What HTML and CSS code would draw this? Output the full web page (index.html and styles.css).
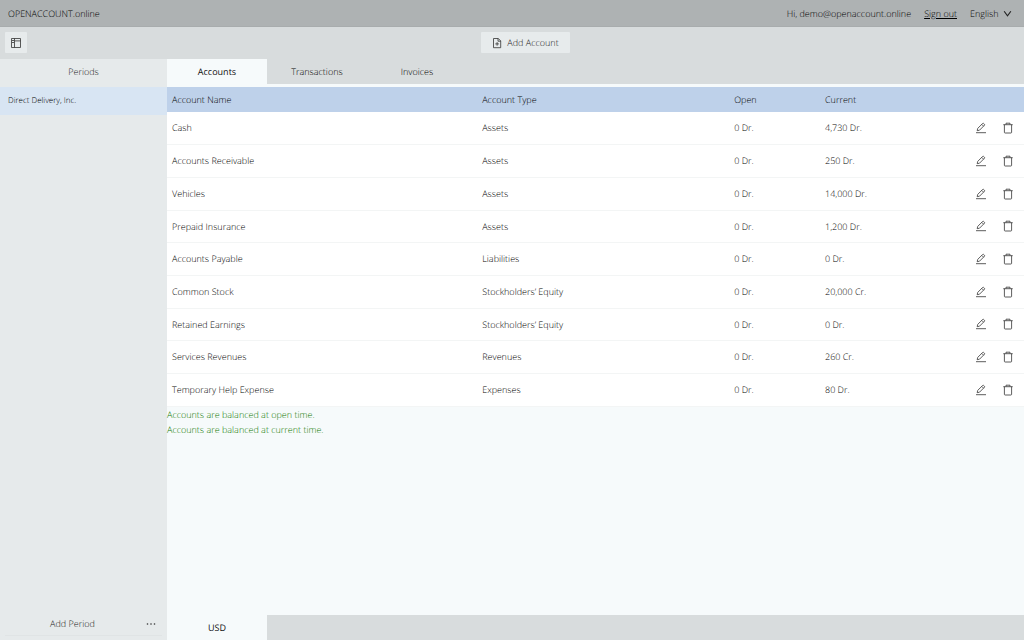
FILE: index.html
```
<!DOCTYPE html>
<html lang="en">
<head>
<meta charset="utf-8">
<meta name="viewport" content="width=device-width, initial-scale=1">
<title>OPENACCOUNT.online</title>
<link rel="stylesheet" href="styles.css">
</head>
<body>
<svg class="sprite" aria-hidden="true">
  <symbol id="edit" viewBox="0 0 12 12"><path d="M1 10.7h10M2.2 8.7l.5-2.3L7.6 1.5a.8.8 0 0 1 1.1 0l.7.7a.8.8 0 0 1 0 1.1L4.5 8.2zM6.8 2.4l1.8 1.8"/></symbol>
  <symbol id="trash" viewBox="0 0 12 12"><path d="M1.3 2.7h9.4M4 2.5V1.2h4v1.3M2.4 2.7v7.6q0 .7.7.7h5.8q.7 0 .7-.7V2.7"/></symbol>
</svg>
<div class="app">
  <header class="topbar">
    <span class="brand">OPENACCOUNT.online</span>
    <span class="greeting">Hi, demo@openaccount.online</span>
    <a class="signout" href="#">Sign out</a>
    <label class="language">
      <select class="language-select" aria-label="Language"><option>English</option></select>
      <svg class="chevron" viewBox="0 0 8 8"><path d="M1 2l3 4 3-4"/></svg>
    </label>
  </header>
  <div class="toolbar">
    <button class="tool" type="button" aria-label="Toggle periods">
      <svg class="icon" viewBox="0 0 12 12"><path d="M1.5 1.5h9v9h-9zM4.5 1.5v9M4.5 3.9h6M2 3.5h2M2 5.5h2"/></svg>
    </button>
    <div class="toolbar-main">
      <button class="tool add-account" type="button">
        <svg class="icon" viewBox="0 0 12 12"><path d="M2.5 1.5h4.8l2.4 2.4v6.8H2.5zM7 1.5v2.7h2.7M6.1 5.1v3.6M4.3 6.9h3.6"/></svg>
        Add Account
      </button>
    </div>
  </div>
  <div class="workspace">
    <aside class="sidebar">
      <h2 class="sidebar-title">Periods</h2>
      <a class="period" href="#">Direct Delivery, Inc.</a>
      <div class="period-actions">
        <button class="add-period" type="button">Add Period</button>
        <button class="more" type="button" aria-label="More"><svg class="dots" viewBox="0 0 10 4"><circle cx="1.5" cy="2" r=".8"/><circle cx="5" cy="2" r=".8"/><circle cx="8.5" cy="2" r=".8"/></svg></button>
      </div>
    </aside>
    <main class="content">
      <nav class="tabs">
        <button class="tab active" type="button">Accounts</button>
        <button class="tab" type="button">Transactions</button>
        <button class="tab" type="button">Invoices</button>
      </nav>
      <div class="sheet">
        <table class="accounts">
          <colgroup><col class="col-name"><col class="col-type"><col class="col-open"><col class="col-current"><col class="col-actions"></colgroup>
          <thead><tr><th>Account Name</th><th>Account Type</th><th>Open</th><th>Current</th><th></th></tr></thead>
          <tbody id="rows"></tbody>
        </table>
        <p class="status">Accounts are balanced at open time.</p>
        <p class="status">Accounts are balanced at current time.</p>
      </div>
      <nav class="currencies"><button class="tab currency active" type="button">USD</button></nav>
    </main>
  </div>
</div>
<script src="app.js"></script>
</body>
</html>
```
FILE: styles.css
```
* { box-sizing: border-box; }
body {
  margin: 0;
  font: 300 9px/15px "Open Sans", "Noto Sans", sans-serif;
  text-rendering: geometricPrecision;
  color: #000;
}
button, select { font: inherit; color: inherit; border: 0; background: none; padding: 0; text-rendering: inherit; }
a { color: inherit; }
.sprite { position: absolute; width: 0; height: 0; }
.app { display: flex; flex-direction: column; min-height: 100vh; background: #d8dcdd; }
.topbar { display: flex; align-items: center; height: 27px; padding: 0 12px 0 8px; background: #aeb2b3; border-bottom: 1px solid #a8acad; }
.brand { flex: 1; }
.signout { margin: 0 13px; }
.language { display: flex; align-items: center; gap: 4px; }
.language-select { appearance: none; }
.chevron { width: 9px; height: 9px; fill: none; stroke: #222; }
.toolbar { display: flex; align-items: center; height: 32px; padding: 0 0 1px 5px; }
.toolbar-main { flex: 1; display: flex; justify-content: center; }
.tool { display: flex; align-items: center; gap: 4px; justify-content: center; min-width: 22px; height: 21px; border-radius: 1px; background: #e7ebec; color: #222; }
.add-account { padding: 0 11px 0 10px; }
.icon { width: 12px; height: 12px; fill: none; stroke: #333; stroke-width: 0.8; }
.workspace { flex: 1; display: flex; }
.sidebar { flex: 0 0 167px; display: flex; flex-direction: column; background: #e6eaeb; }
.sidebar-title { margin: 0; font: inherit; line-height: 25px; height: 28px; text-align: center; color: #222; }
.period { display: block; padding: 0 8px; font-size: 8px; line-height: 28px; background: #d8e5f3; text-decoration: none; }
.period-actions { display: flex; margin: auto 5px 4px; height: 24px; border-bottom: 1px solid #e0e4e5; color: #222; }
.add-period { flex: 1; }
.more { display: grid; place-items: center; width: 22px; }
.dots { width: 10px; height: 4px; fill: #333; }
.content { flex: 1; min-width: 0; display: flex; flex-direction: column; }
.tabs, .currencies { display: flex; height: 25px; }
.tab { width: 100px; }
.active { background: #f6fafb; color: #111; font-weight: 400; }
.sheet { flex: 1; padding-top: 3px; background: #f6fafb; }
.accounts { width: 100%; table-layout: fixed; border-collapse: collapse; background: #fff; }
.col-name { width: 36.2%; }
.col-type { width: 29.4%; }
.col-open { width: 10.6%; }
.col-current { width: 16%; }
.accounts th { height: 25px; padding: 0 5px; font-weight: inherit; text-align: left; background: #bed1ea; }
.accounts td { height: 33px; padding: 0 5px; border-bottom: 1px solid #f3f5f5; }
.accounts tr:nth-child(3n + 1) td { height: 32px; }
.actions { display: flex; justify-content: flex-end; gap: 5px; }
.action { display: grid; place-items: center; width: 22px; height: 22px; }
.status { margin: 0; color: #107800; }
```
FILE: app.js
```
const accounts = [
  ["Cash", "Assets", "4,730 Dr."],
  ["Accounts Receivable", "Assets", "250 Dr."],
  ["Vehicles", "Assets", "14,000 Dr."],
  ["Prepaid Insurance", "Assets", "1,200 Dr."],
  ["Accounts Payable", "Liabilities", "0 Dr."],
  ["Common Stock", "Stockholders’ Equity", "20,000 Cr."],
  ["Retained Earnings", "Stockholders’ Equity", "0 Dr."],
  ["Services Revenues", "Revenues", "260 Cr."],
  ["Temporary Help Expense", "Expenses", "80 Dr."]
];
const action = (id, label) =>
  `<button class="action" type="button" aria-label="${label}"><svg class="icon"><use href="#${id}"/></svg></button>`;
document.getElementById("rows").innerHTML = accounts.map(([name, type, current]) =>
  `<tr><td>${name}</td><td>${type}</td><td>0 Dr.</td><td>${current}</td>
   <td><div class="actions">${action("edit", "Edit " + name)}${action("trash", "Delete " + name)}</div></td></tr>`).join("");
```
